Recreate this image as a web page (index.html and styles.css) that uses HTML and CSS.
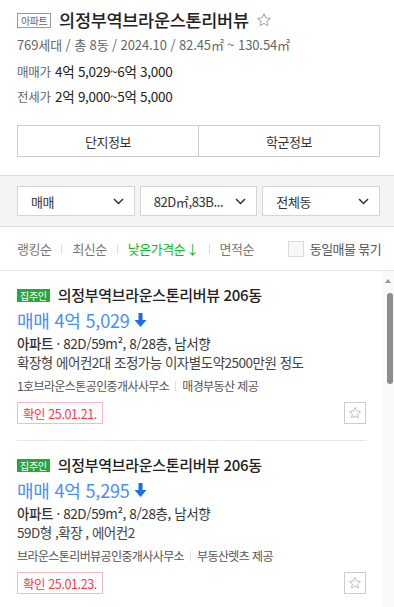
FILE: index.html
```html
<!DOCTYPE html>
<html lang="ko">
<head>
    <meta charset="UTF-8">
    <meta name="viewport" content="width=device-width, initial-scale=1.0">
    <title>의정부역브라운스톤리버뷰</title>
    <link rel="stylesheet" href="styles.css">
</head>
<body>
    <div class="summary">
        <div class="title-row">
            <span class="type-badge">아파트</span>
            <h1 class="title">의정부역브라운스톤리버뷰</h1>
            <svg class="fav" width="16" height="16" viewBox="0 0 24 24"><path d="M12 2.5l2.9 6.2 6.6.7-5 4.5 1.4 6.6L12 17.1l-5.9 3.4 1.4-6.6-5-4.5 6.6-.7z" fill="none" stroke="#b0b0b0" stroke-width="1.6" stroke-linejoin="round"/></svg>
        </div>
        <p class="meta">769세대 / 총 8동 / 2024.10 / 82.45㎡ ~ 130.54㎡</p>
        <p class="range"><span class="range-label">매매가</span> 4억 5,029~6억 3,000</p>
        <p class="range range-2"><span class="range-label">전세가</span> 2억 9,000~5억 5,000</p>
        <div class="tabs">
            <a class="tab">단지정보</a>
            <a class="tab">학군정보</a>
        </div>
    </div>

    <div class="filters">
        <div class="select"><span>매매</span><svg width="11" height="7" viewBox="0 0 11 7"><path d="M1 1l4.5 4.5L10 1" fill="none" stroke="#333" stroke-width="1.5"/></svg></div>
        <div class="select"><span>82D㎡,83B...</span><svg width="11" height="7" viewBox="0 0 11 7"><path d="M1 1l4.5 4.5L10 1" fill="none" stroke="#333" stroke-width="1.5"/></svg></div>
        <div class="select"><span>전체동</span><svg width="11" height="7" viewBox="0 0 11 7"><path d="M1 1l4.5 4.5L10 1" fill="none" stroke="#333" stroke-width="1.5"/></svg></div>
    </div>

    <div class="sort">
        <div class="sort-links">
            <a>랭킹순</a><i></i>
            <a>최신순</a><i></i>
            <a class="on">낮은가격순<span class="arr">↓</span></a><i></i>
            <a>면적순</a>
        </div>
        <label class="group"><span class="check"></span>동일매물 묶기</label>
    </div>

    <div class="list">
        <div class="item">
            <div class="item-title"><span class="owner">집주인</span>의정부역브라운스톤리버뷰 206동</div>
            <div class="price">매매 4억 5,029<svg class="down" width="13" height="14" viewBox="0 0 13 14"><path d="M4.5 0h4v7h4L6.5 14 0.5 7h4z" fill="#1b6fe6"/></svg></div>
            <p class="info"><b>아파트</b> · 82D/59m², 8/28층, 남서향</p>
            <p class="desc">확장형 에어컨2대 조정가능 이자별도약2500만원 정도</p>
            <p class="agent">1호브라운스톤공인중개사사무소<i></i>매경부동산 제공</p>
            <div class="item-foot">
                <span class="confirm">확인 25.01.21.</span>
                <span class="star-btn"><svg width="14" height="14" viewBox="0 0 24 24"><path d="M12 2.5l2.9 6.2 6.6.7-5 4.5 1.4 6.6L12 17.1l-5.9 3.4 1.4-6.6-5-4.5 6.6-.7z" fill="none" stroke="#bbb" stroke-width="1.6" stroke-linejoin="round"/></svg></span>
            </div>
        </div>
        <div class="item">
            <div class="item-title"><span class="owner">집주인</span>의정부역브라운스톤리버뷰 206동</div>
            <div class="price">매매 4억 5,295<svg class="down" width="13" height="14" viewBox="0 0 13 14"><path d="M4.5 0h4v7h4L6.5 14 0.5 7h4z" fill="#1b6fe6"/></svg></div>
            <p class="info"><b>아파트</b> · 82D/59m², 8/28층, 남서향</p>
            <p class="desc">59D형 ,확장 , 에어컨2</p>
            <p class="agent">브라운스톤리버뷰공인중개사사무소<i></i>부동산렛츠 제공</p>
            <div class="item-foot">
                <span class="confirm">확인 25.01.23.</span>
                <span class="star-btn"><svg width="14" height="14" viewBox="0 0 24 24"><path d="M12 2.5l2.9 6.2 6.6.7-5 4.5 1.4 6.6L12 17.1l-5.9 3.4 1.4-6.6-5-4.5 6.6-.7z" fill="none" stroke="#bbb" stroke-width="1.6" stroke-linejoin="round"/></svg></span>
            </div>
        </div>
        <div class="scrollbar"><span class="up"></span><span class="thumb"></span></div>
    </div>
</body>
</html>
```

FILE: styles.css
```css
* { box-sizing: border-box; }
body { margin: 0; font-family: "Noto Sans CJK KR", "Noto Sans", sans-serif; color: #222; background: #fff; overflow: hidden; }
p { margin: 0; }
a { cursor: pointer; }

.summary { padding: 7px 14px 0 17px; }
.title-row { display: flex; align-items: center; height: 26px; }
.type-badge { font-size: 10px; line-height: 13px; color: #666; border: 1px solid #999; padding: 0 3px; margin-right: 8px; letter-spacing: -0.5px; }
.title { margin: 0; font-size: 17.5px; font-weight: 500; line-height: 26px; letter-spacing: -0.3px; color: #222; }
.fav { margin-left: 7px; }
.meta { margin-top: 2px; font-size: 13px; line-height: 20px; color: #666; letter-spacing: -0.1px; }
.range { margin-top: 5px; font-size: 13.5px; line-height: 22px; color: #222; letter-spacing: -0.3px; }
.range-2 { margin-top: 2px; }
.range-label { font-size: 12.5px; color: #666; margin-right: 1px; }
.tabs { display: flex; margin-top: 17px; border: 1px solid #ccc; height: 32px; }
.tab { flex: 1; display: flex; align-items: center; justify-content: center; font-size: 13px; color: #333; letter-spacing: -0.5px; }
.tab + .tab { border-left: 1px solid #ccc; }

.filters { display: flex; gap: 5px; margin-top: 18px; padding: 10px 14px 10px 17px; background: #f4f4f4; border-top: 1px solid #ddd; border-bottom: 1px solid #ddd; }
.select { flex: 1; height: 30px; display: flex; align-items: center; justify-content: space-between; padding: 0 10px 0 13px; background: #fff; border: 1px solid #d5d5d5; font-size: 13px; color: #333; letter-spacing: -0.4px; }

.sort { display: flex; align-items: center; justify-content: space-between; height: 44px; padding: 0 13px 0 17px; border-bottom: 1px solid #e5e5e5; }
.sort-links { display: flex; align-items: center; font-size: 13px; color: #777; letter-spacing: -0.5px; }
.sort-links i { width: 1px; height: 10px; background: #ddd; margin: 0 10px; }
.sort-links .on { color: #12b824; }
.arr { margin-left: 1px; }
.group { display: flex; align-items: center; font-size: 13px; color: #555; letter-spacing: -0.6px; }
.check { width: 16px; height: 16px; border: 1px solid #ddd; background: #f8f8f8; margin-right: 6px; }

.list { position: relative; height: 338px; overflow: hidden; padding: 0 28px 0 17px; }
.item { padding: 14px 0 16px; border-bottom: 1px solid #e8e8e8; }
.item-title { display: flex; align-items: center; font-size: 15px; font-weight: 500; line-height: 20px; letter-spacing: -0.3px; color: #222; }
.owner { font-size: 10px; line-height: 13px; color: #fff; background: #2aa53b; padding: 0 3px; margin-right: 8px; font-weight: 400; letter-spacing: -0.3px; }
.price { display: flex; align-items: center; margin-top: 2px; font-size: 18px; line-height: 26px; color: #4a8ff2; letter-spacing: -0.2px; }
.down { margin-left: 4px; }
.info { font-size: 13.5px; line-height: 20px; color: #333; letter-spacing: -0.4px; }
.info b { font-weight: 500; }
.desc { font-size: 13.5px; line-height: 19px; color: #444; letter-spacing: -0.5px; }
.agent { display: flex; align-items: center; margin-top: 5px; font-size: 12px; line-height: 18px; color: #555; letter-spacing: -0.6px; }
.agent i { width: 1px; height: 10px; background: #ddd; margin: 0 6px; }
.item-foot { display: flex; justify-content: space-between; align-items: center; margin-top: 7px; }
.confirm { height: 22px; display: flex; align-items: center; padding: 0 5px; border: 1px solid #f7b9c0; color: #f23a4e; font-size: 12.5px; letter-spacing: -0.4px; }
.star-btn { width: 22px; height: 22px; display: flex; align-items: center; justify-content: center; border: 1px solid #ccc; }

.scrollbar { position: absolute; top: 0; right: 0; bottom: 0; width: 12px; background: #f9f9f9; }
.scrollbar .up { position: absolute; top: 8px; left: 3px; border-left: 3px solid transparent; border-right: 3px solid transparent; border-bottom: 4px solid #999; }
.scrollbar .thumb { position: absolute; top: 22px; left: 5px; width: 6px; height: 91px; border-radius: 3px; background: #8c8c8c; }
```
